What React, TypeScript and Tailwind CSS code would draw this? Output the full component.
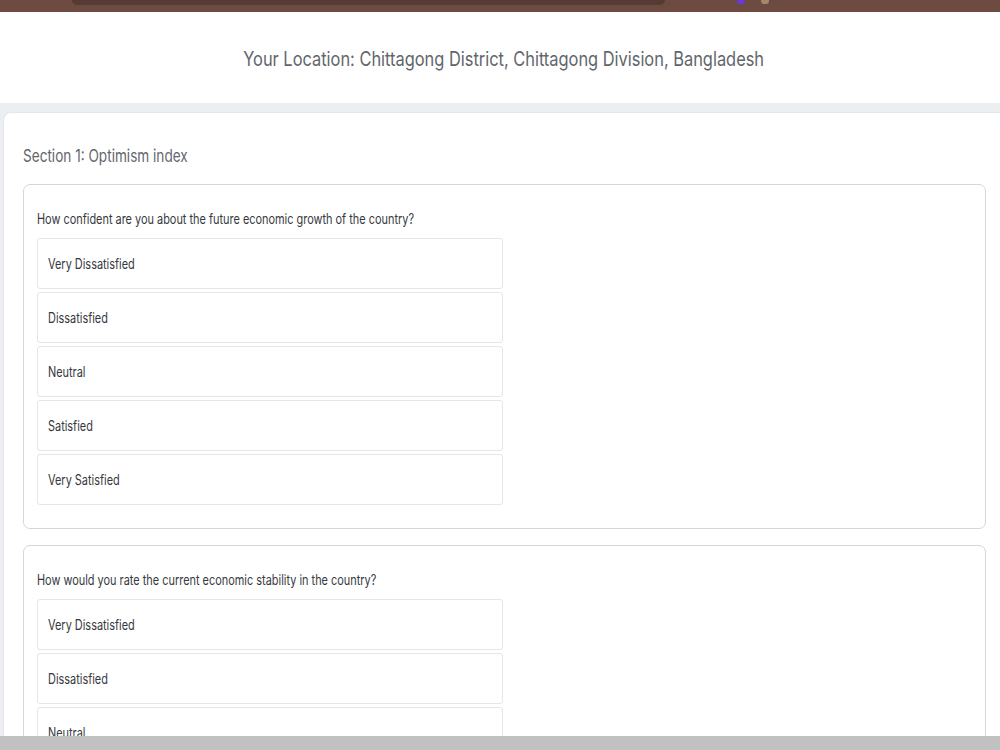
import React from 'react';

const options = ['Very Dissatisfied', 'Dissatisfied', 'Neutral', 'Satisfied', 'Very Satisfied'];

const questions = [
  'How confident are you about the future economic growth of the country?',
  'How would you rate the current economic stability in the country?',
];

// the screenshot is squeezed horizontally, so text is narrowed to match
function Narrow({ children, className = 'scale-x-[0.78] origin-left' }: { children: React.ReactNode; className?: string }) {
  return <span className={`inline-block whitespace-nowrap ${className}`}>{children}</span>;
}

function Option({ label }: { label: string }) {
  return (
    <div className="h-[51px] w-[466px] flex items-center px-[10px] rounded-[3px] border border-[#e3e6ea] bg-white text-[14px] text-[#35383d]">
      <Narrow>{label}</Narrow>
    </div>
  );
}

function QuestionCard({ text }: { text: string }) {
  return (
    <div className="rounded-[7px] border border-[#d4d6d9] bg-white pl-[13px] pr-4 pt-[24px] pb-[23px]">
      <p className="text-[14px] leading-[20px] text-[#35383d] mb-[9px]">
        <Narrow>{text}</Narrow>
      </p>
      <div className="flex flex-col gap-[3px]">
        {options.map((o) => (
          <Option key={o} label={o} />
        ))}
      </div>
    </div>
  );
}

export default function App() {
  return (
    <div className="w-[1000px] h-[750px] overflow-hidden flex flex-col bg-white font-['Inter',sans-serif]">
      <div className="h-[12px] shrink-0 bg-[#6d4b40] flex items-start">
        <div className="ml-[72px] w-[593px] h-[5px] rounded-b-[8px] bg-[#553b34]" />
        <div className="ml-[72px] mt-[-2px] w-[8px] h-[6px] rounded-full bg-[#6a3ad6]" />
        <div className="ml-[16px] mt-[-2px] w-[8px] h-[6px] rounded-full bg-[#a08a6a]" />
      </div>
      <div className="h-[91px] shrink-0 flex items-center justify-center text-[20px] text-[#62666c] pt-[3px] pl-[8px]">
        <Narrow className="scale-x-[0.82] origin-center">
          Your Location: Chittagong District, Chittagong Division, Bangladesh
        </Narrow>
      </div>
      <div className="flex-1 bg-[#eceff2] pt-[9px] pl-[3px] flex flex-col min-h-0">
        <div className="flex-1 bg-white rounded-tl-[8px] border-l border-t border-[#e4e6e9] pl-[19px] pr-[14px] min-h-0 overflow-hidden">
          <h2 className="text-[17px] text-[#62666c] pt-[32px] pb-[17px] leading-[22px]">
            <Narrow className="scale-x-[0.8] origin-left">Section 1: Optimism index</Narrow>
          </h2>
          <div className="flex flex-col gap-[16px]">
            {questions.map((q) => (
              <QuestionCard key={q} text={q} />
            ))}
          </div>
        </div>
      </div>
      <div className="h-[14px] shrink-0 bg-[#c1c1c1]" />
    </div>
  );
}
